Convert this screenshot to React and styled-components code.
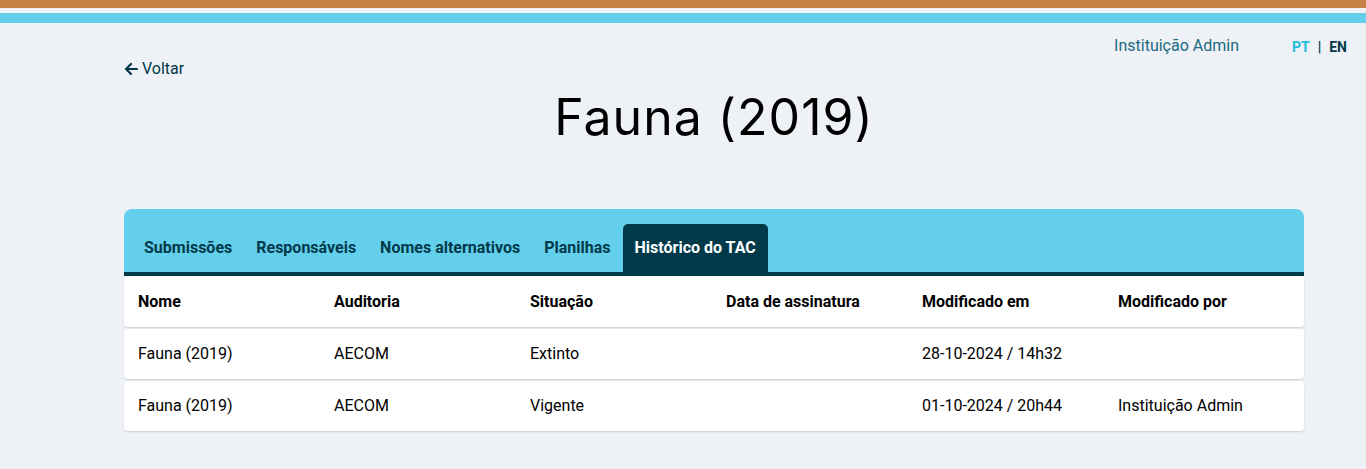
import React, { useState } from 'react';
import styled, { createGlobalStyle } from 'styled-components';

const GlobalStyle = createGlobalStyle`
  html, body {
    margin: 0;
    padding: 0;
    background: #eef1f6;
    font-family: Roboto, "Liberation Sans", sans-serif;
  }
  * { box-sizing: border-box; }
`;

const colors = {
  orange: '#c98245',
  sky: '#64cfeb',
  dark: '#003a4a',
  teal: '#1b6a82',
  bright: '#22bcdc',
  bg: '#eef1f6',
};

const Page = styled.div`
  min-height: 469px;
  background: ${colors.bg};
`;

const Stripes = styled.div`
  height: 23px;
  background: linear-gradient(
    to bottom,
    ${colors.orange} 0 8px,
    ${colors.bg} 8px 13px,
    ${colors.sky} 13px 23px
  );
`;

const TopBar = styled.div`
  display: flex;
  justify-content: flex-end;
  align-items: center;
  gap: 53px;
  padding: 12px 19px 0 0;
  height: 33px;
`;

const UserName = styled.span`
  color: ${colors.teal};
  font-size: 16px;
`;

const Lang = styled.div`
  display: flex;
  gap: 8px;
  font-size: 14px;
  font-weight: 700;
  color: ${colors.dark};
  padding-top: 2px;
`;

const LangOption = styled.span`
  color: ${p => (p.$active ? colors.bright : colors.dark)};
  cursor: pointer;
`;

const Container = styled.div`
  margin: 0 62px 0 124px;
`;

const BackLink = styled.a`
  display: inline-flex;
  align-items: center;
  gap: 4px;
  color: ${colors.dark};
  font-size: 16px;
  text-decoration: none;
  margin-top: 3px;
  cursor: pointer;
`;

const Title = styled.h1`
  margin: 5px 0 0;
  text-align: center;
  font-family: Inter, "Open Sans", sans-serif;
  font-weight: 400;
  font-size: 50px;
  letter-spacing: 1px;
  line-height: 64px;
  color: #000;
`;

const Card = styled.div`
  margin-top: 60px;
`;

const TabBar = styled.div`
  display: flex;
  align-items: flex-end;
  background: ${colors.sky};
  border-radius: 8px 8px 0 0;
  padding: 15px 8px 0;
  border-bottom: 4px solid ${colors.dark};
`;

const Tab = styled.button`
  border: none;
  background: ${p => (p.$active ? colors.dark : 'transparent')};
  color: ${p => (p.$active ? '#fff' : colors.dark)};
  font-family: Roboto, "Liberation Sans", sans-serif;
  font-size: 16px;
  font-weight: 700;
  height: 48px;
  padding: 0 12px;
  border-radius: 5px 5px 0 0;
  cursor: pointer;
`;

const Row = styled.div`
  display: grid;
  grid-template-columns: repeat(6, 196px);
  align-items: center;
  height: ${p => (p.$head ? '51px' : '50px')};
  background: #fff;
  border-radius: 4px;
  margin-bottom: 2px;
  box-shadow: 0 1px 2px rgba(0, 0, 0, 0.14);
  font-size: 16px;
  font-weight: ${p => (p.$head ? 700 : 400)};
  color: #000;
`;

const Cell = styled.div`
  padding-left: 14px;
  white-space: nowrap;
`;

const tabs = ['Submissões', 'Responsáveis', 'Nomes alternativos', 'Planilhas', 'Histórico do TAC'];

const headers = ['Nome', 'Auditoria', 'Situação', 'Data de assinatura', 'Modificado em', 'Modificado por'];

const history = [
  ['Fauna (2019)', 'AECOM', 'Extinto', '', '28-10-2024 / 14h32', ''],
  ['Fauna (2019)', 'AECOM', 'Vigente', '', '01-10-2024 / 20h44', 'Instituição Admin'],
];

const ArrowLeft = () => (
  <svg width="14" height="14" viewBox="0 0 14 14" fill="none" stroke={colors.dark} strokeWidth="2.2" strokeLinecap="round" strokeLinejoin="round">
    <path d="M13 7H2M7 2L2 7l5 5" />
  </svg>
);

export default function App() {
  const [activeTab, setActiveTab] = useState('Histórico do TAC');
  const [lang, setLang] = useState('PT');

  return (
    <Page>
      <GlobalStyle />
      <Stripes />
      <TopBar>
        <UserName>Instituição Admin</UserName>
        <Lang>
          <LangOption $active={lang === 'PT'} onClick={() => setLang('PT')}>PT</LangOption>
          <span>|</span>
          <LangOption $active={lang === 'EN'} onClick={() => setLang('EN')}>EN</LangOption>
        </Lang>
      </TopBar>
      <Container>
        <BackLink>
          <ArrowLeft />
          Voltar
        </BackLink>
        <Title>Fauna (2019)</Title>
        <Card>
          <TabBar>
            {tabs.map(t => (
              <Tab key={t} $active={activeTab === t} onClick={() => setActiveTab(t)}>
                {t}
              </Tab>
            ))}
          </TabBar>
          <Row $head>
            {headers.map(h => (
              <Cell key={h}>{h}</Cell>
            ))}
          </Row>
          {history.map((r, i) => (
            <Row key={i}>
              {r.map((c, j) => (
                <Cell key={j}>{c}</Cell>
              ))}
            </Row>
          ))}
        </Card>
      </Container>
    </Page>
  );
}
